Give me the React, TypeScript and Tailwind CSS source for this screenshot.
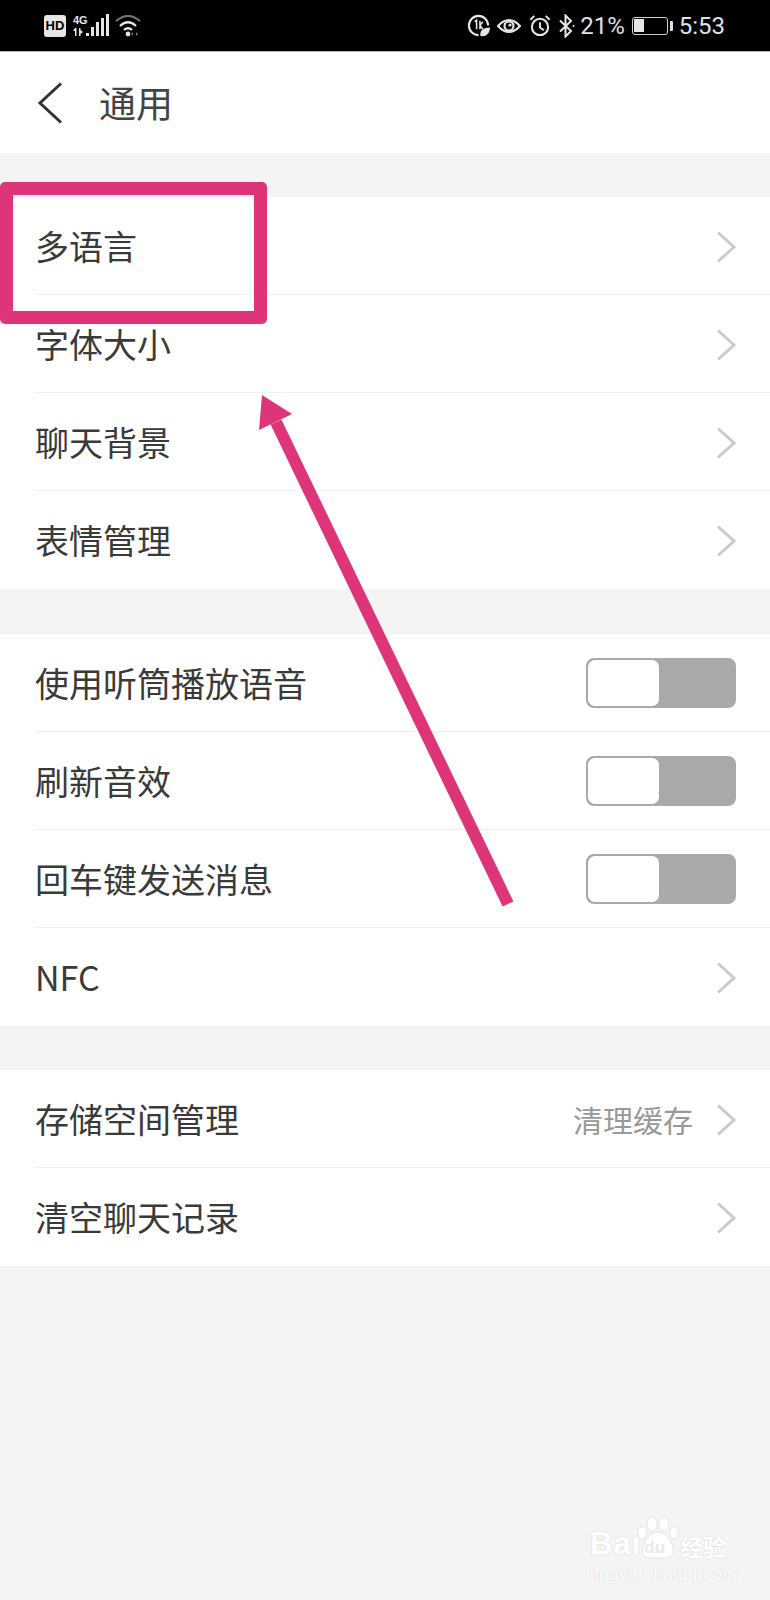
import React from 'react';

const cjk = "font-['Noto_Sans_CJK_SC','Noto_Sans',sans-serif]";

function Chevron() {
  return (
    <svg width="20" height="32" viewBox="0 0 20 32" fill="none" className="mt-[2px] shrink-0">
      <path d="M2 1.5 L18 16 L2 30.5" stroke="#cbcbcb" strokeWidth="3" />
    </svg>
  );
}

function Toggle() {
  return (
    <div className="flex h-[50px] w-[150px] shrink-0 rounded-[8px] border-2 border-[#a9aaa8] bg-[#a9aaa8]">
      <div className="h-full w-[71px] rounded-[7px] bg-white" />
    </div>
  );
}

function Row({ label, right, last }: { label: string; right?: React.ReactNode; last?: boolean }) {
  return (
    <div className={`ml-[35px] flex h-[98px] items-center justify-between pr-[34px] ${last ? '' : 'border-b border-[#f0f0f0]'}`}>
      <span className="text-[34px] leading-none text-[#3a3a3a]">{label}</span>
      {right ?? <Chevron />}
    </div>
  );
}

function StatusLeft() {
  return (
    <div className="flex items-center">
      <div className="flex h-[22px] w-[22px] items-center justify-center rounded-[3px] bg-[#e6e6e6] font-['Liberation_Sans',sans-serif] text-[13px] font-bold text-black">
        HD
      </div>
      <svg width="36" height="24" viewBox="0 0 36 24" className="ml-[7px]" fill="#e6e6e6">
        <text x="0" y="10" fontSize="11" fontWeight="700" fontFamily="Liberation Sans">4G</text>
        <path d="M2 14h1.5v8H2zM0 17l2-3v3zM6 14h1.5v8H6zM7.5 16l2.5 2-2.5 2z" />
        <rect x="13" y="19" width="3" height="3" />
        <rect x="18" y="13" width="3" height="9" />
        <rect x="23" y="8" width="3" height="14" />
        <rect x="28" y="4" width="3" height="18" />
        <rect x="33" y="0" width="3" height="22" />
      </svg>
      <svg width="27" height="24" viewBox="0 0 27 24" className="ml-[6px]" fill="none" stroke="#e6e6e6">
        <path d="M1 7 Q13 -3 25 7" strokeWidth="2" stroke="#777" />
        <path d="M5 12 Q13 4.5 21 12" strokeWidth="2.2" />
        <path d="M9 16 Q13 12.5 17 16" strokeWidth="2.2" />
        <circle cx="13" cy="20" r="2.4" fill="#e6e6e6" stroke="none" />
        <path d="M18 18l-2 2 2 2zM21 18v4l2-2z" fill="#777" stroke="none" />
      </svg>
    </div>
  );
}

function StatusRight() {
  return (
    <div className="flex items-center font-['Roboto',sans-serif] text-[24px] leading-none text-[#e0e0e0]">
      <svg width="23" height="23" viewBox="0 0 24 24" fill="none" stroke="#e6e6e6">
        <path d="M12 22 A10 10 0 1 1 22 12" strokeWidth="2.2" />
        <path d="M8 8l2-1.5V16M13.5 7v9M13.5 12l3-4M13.5 12l3 4" strokeWidth="1.6" />
        <path d="M14 23 C13 17 17 14 24 14 C24 20 20 24 14 23z" fill="#e6e6e6" stroke="none" />
      </svg>
      <svg width="24" height="18" viewBox="0 0 24 18" fill="none" stroke="#e6e6e6" className="ml-[7px]">
        <path d="M1 9 Q12 -3 23 9 Q12 21 1 9z" strokeWidth="2.2" />
        <circle cx="12" cy="9" r="4.5" strokeWidth="2.2" />
        <circle cx="13" cy="8" r="1.6" fill="#e6e6e6" stroke="none" />
      </svg>
      <svg width="22" height="23" viewBox="0 0 23 23" fill="none" stroke="#e6e6e6" className="ml-[8px]">
        <circle cx="11.5" cy="13" r="8.5" strokeWidth="2.2" />
        <path d="M11.5 8v5.5l4 3M1.5 5.5l4-4M21.5 5.5l-4-4" strokeWidth="2" />
      </svg>
      <svg width="17" height="24" viewBox="0 0 17 24" fill="none" stroke="#e6e6e6" strokeWidth="2" className="ml-[7px]">
        <path d="M2 6.5 L13 17 L7.5 22.5 V1.5 L13 7 L2 17.5" />
        <circle cx="15.5" cy="12" r="1" fill="#e6e6e6" stroke="none" />
      </svg>
      <span className="ml-[5px]">21%</span>
      <div className="ml-[7px] flex items-center">
        <div className="h-[18px] w-[36px] rounded-[3px] border-[1.5px] border-[#cfcfcf] p-[1.5px]">
          <div className="h-full w-[10px] bg-[#e6e6e6]" />
        </div>
        <div className="ml-[2px] h-[10px] w-[3px] rounded-r-[1px] bg-[#e0e0e0]" />
      </div>
      <span className="ml-[6px]">5:53</span>
    </div>
  );
}

function Watermark() {
  const glow = '[text-shadow:0_0_1.5px_#cfcfcf]';
  return (
    <div className={`absolute left-[590px] top-[1517px] flex w-[142px] flex-col text-white ${glow}`}>
      <div className="flex h-[44px] items-end">
        <span className="font-['Liberation_Sans',sans-serif] text-[31px] font-bold leading-[34px] tracking-[1px]">Bai</span>
        <div className="relative ml-[-4px] h-[44px] w-[42px]">
          <svg width="42" height="44" viewBox="0 0 42 44" fill="#fff" stroke="#dedede" strokeWidth="0.8">
            <ellipse cx="15" cy="7" rx="5" ry="7" />
            <ellipse cx="27" cy="7" rx="5" ry="7" />
            <ellipse cx="5" cy="16" rx="4.5" ry="6" />
            <ellipse cx="37" cy="16" rx="4.5" ry="6" />
            <path d="M21 15 C30 15 38 28 36 36 C34 43 26 41 21 41 C16 41 8 43 6 36 C4 28 12 15 21 15z" />
          </svg>
          <span className="absolute left-[7px] top-[22px] font-['Liberation_Sans',sans-serif] text-[17px] font-bold leading-none text-[#e9e9e9] [text-shadow:none]">du</span>
        </div>
        <span className="ml-[1px] text-[23px] font-bold leading-[30px]">经验</span>
      </div>
      <span className="mt-[5px] font-['Liberation_Sans',sans-serif] text-[17px] leading-[17px] tracking-[0.6px]">jingyan.baidu.com</span>
    </div>
  );
}

export default function App() {
  return (
    <div className={`relative h-[1600px] w-[770px] overflow-hidden bg-[#f4f4f4] ${cjk}`}>
      <div className="flex h-[52px] items-center justify-between border-b border-[#b5b5b5] bg-black pl-[44px] pr-[45px]">
        <StatusLeft />
        <StatusRight />
      </div>
      <div className="flex h-[101px] items-center bg-white pl-[37px]">
        <svg width="26" height="42" viewBox="0 0 26 42" fill="none">
          <path d="M24 1.5 L3 21 L24 40.5" stroke="#333" strokeWidth="3" />
        </svg>
        <span className="ml-[36px] text-[37px] leading-none text-[#444]">通用</span>
      </div>

      <div className="mt-[44px] bg-white">
        <Row label="多语言" />
        <Row label="字体大小" />
        <Row label="聊天背景" />
        <Row label="表情管理" last />
      </div>
      <div className="mt-[44px] border-y border-[#efefef] bg-white">
        <Row label="使用听筒播放语音" right={<Toggle />} />
        <Row label="刷新音效" right={<Toggle />} />
        <Row label="回车键发送消息" right={<Toggle />} />
        <Row label="NFC" last />
      </div>
      <div className="mt-[43px] bg-white">
        <Row
          label="存储空间管理"
          right={
            <div className="flex items-center gap-[23px]">
              <span className="text-[30px] leading-none text-[#999]">清理缓存</span>
              <Chevron />
            </div>
          }
        />
        <Row label="清空聊天记录" last />
      </div>

      <div className="absolute left-0 top-[182px] h-[142px] w-[267px] rounded-[5px] border-[13px] border-[#dd3577]" />
      <svg className="absolute left-0 top-0" width="770" height="1000" viewBox="0 0 770 1000">
        <path d="M508 904 L276 422" stroke="#dd3577" strokeWidth="12" fill="none" />
        <polygon points="262,395 292,414 259,430" fill="#dd3577" />
      </svg>
      <Watermark />
    </div>
  );
}
